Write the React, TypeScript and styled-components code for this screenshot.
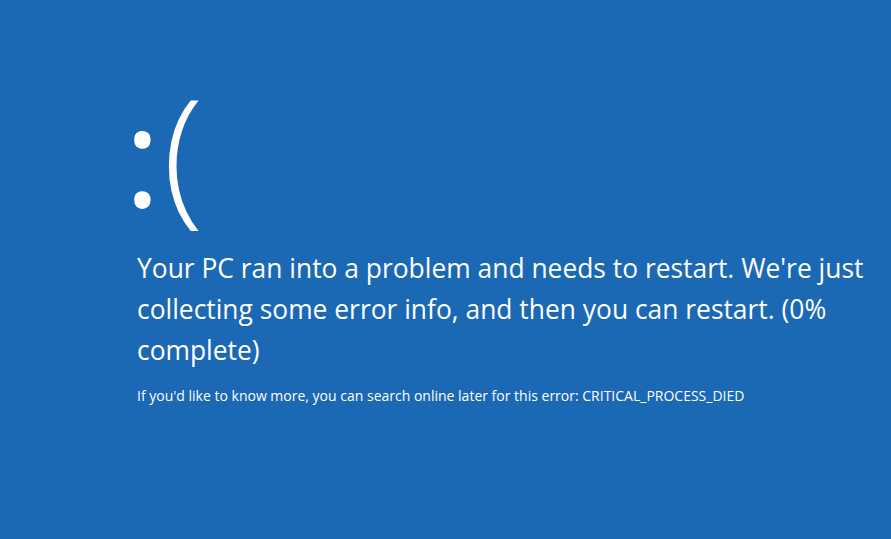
import React from "react";
import styled, { createGlobalStyle } from "styled-components";

const Global = createGlobalStyle`
  html, body { margin: 0; padding: 0; background: #1b68b4; }
  body { width: 891px; height: 539px; overflow: hidden; }
`;

const Screen = styled.main`
  width: 891px;
  height: 539px;
  background: #1b68b4;
  color: #ffffff;
  font-family: "Open Sans", "Noto Sans", sans-serif;
  box-sizing: border-box;
  padding: 59px 0 0 137px;
  display: flex;
  flex-direction: column;
`;

const Face = styled.div`
  display: flex;
  align-items: baseline;
  height: 189px;
  line-height: 180px;
  margin-left: -13px;
`;

const Eyes = styled.span`
  font-size: 140px;
  font-weight: 400;
`;

const Mouth = styled.span`
  font-size: 150px;
  font-weight: 300;
  margin-left: 2px;
`;

const Message = styled.p`
  margin: 0;
  font-size: 26.4px;
  line-height: 41px;
  font-weight: 400;
`;

const Detail = styled.p`
  margin: 16px 0 0;
  font-size: 14px;
  line-height: 18px;
`;

export default function App() {
  return (
    <>
      <Global />
      <Screen>
        <Face>
          <Eyes>:</Eyes>
          <Mouth>(</Mouth>
        </Face>
        <Message>
          Your PC ran into a problem and needs to restart. We're just
          <br />
          collecting some error info, and then you can restart. (0%
          <br />
          complete)
        </Message>
        <Detail>
          If you'd like to know more, you can search online later for this error: CRITICAL_PROCESS_DIED
        </Detail>
      </Screen>
    </>
  );
}
